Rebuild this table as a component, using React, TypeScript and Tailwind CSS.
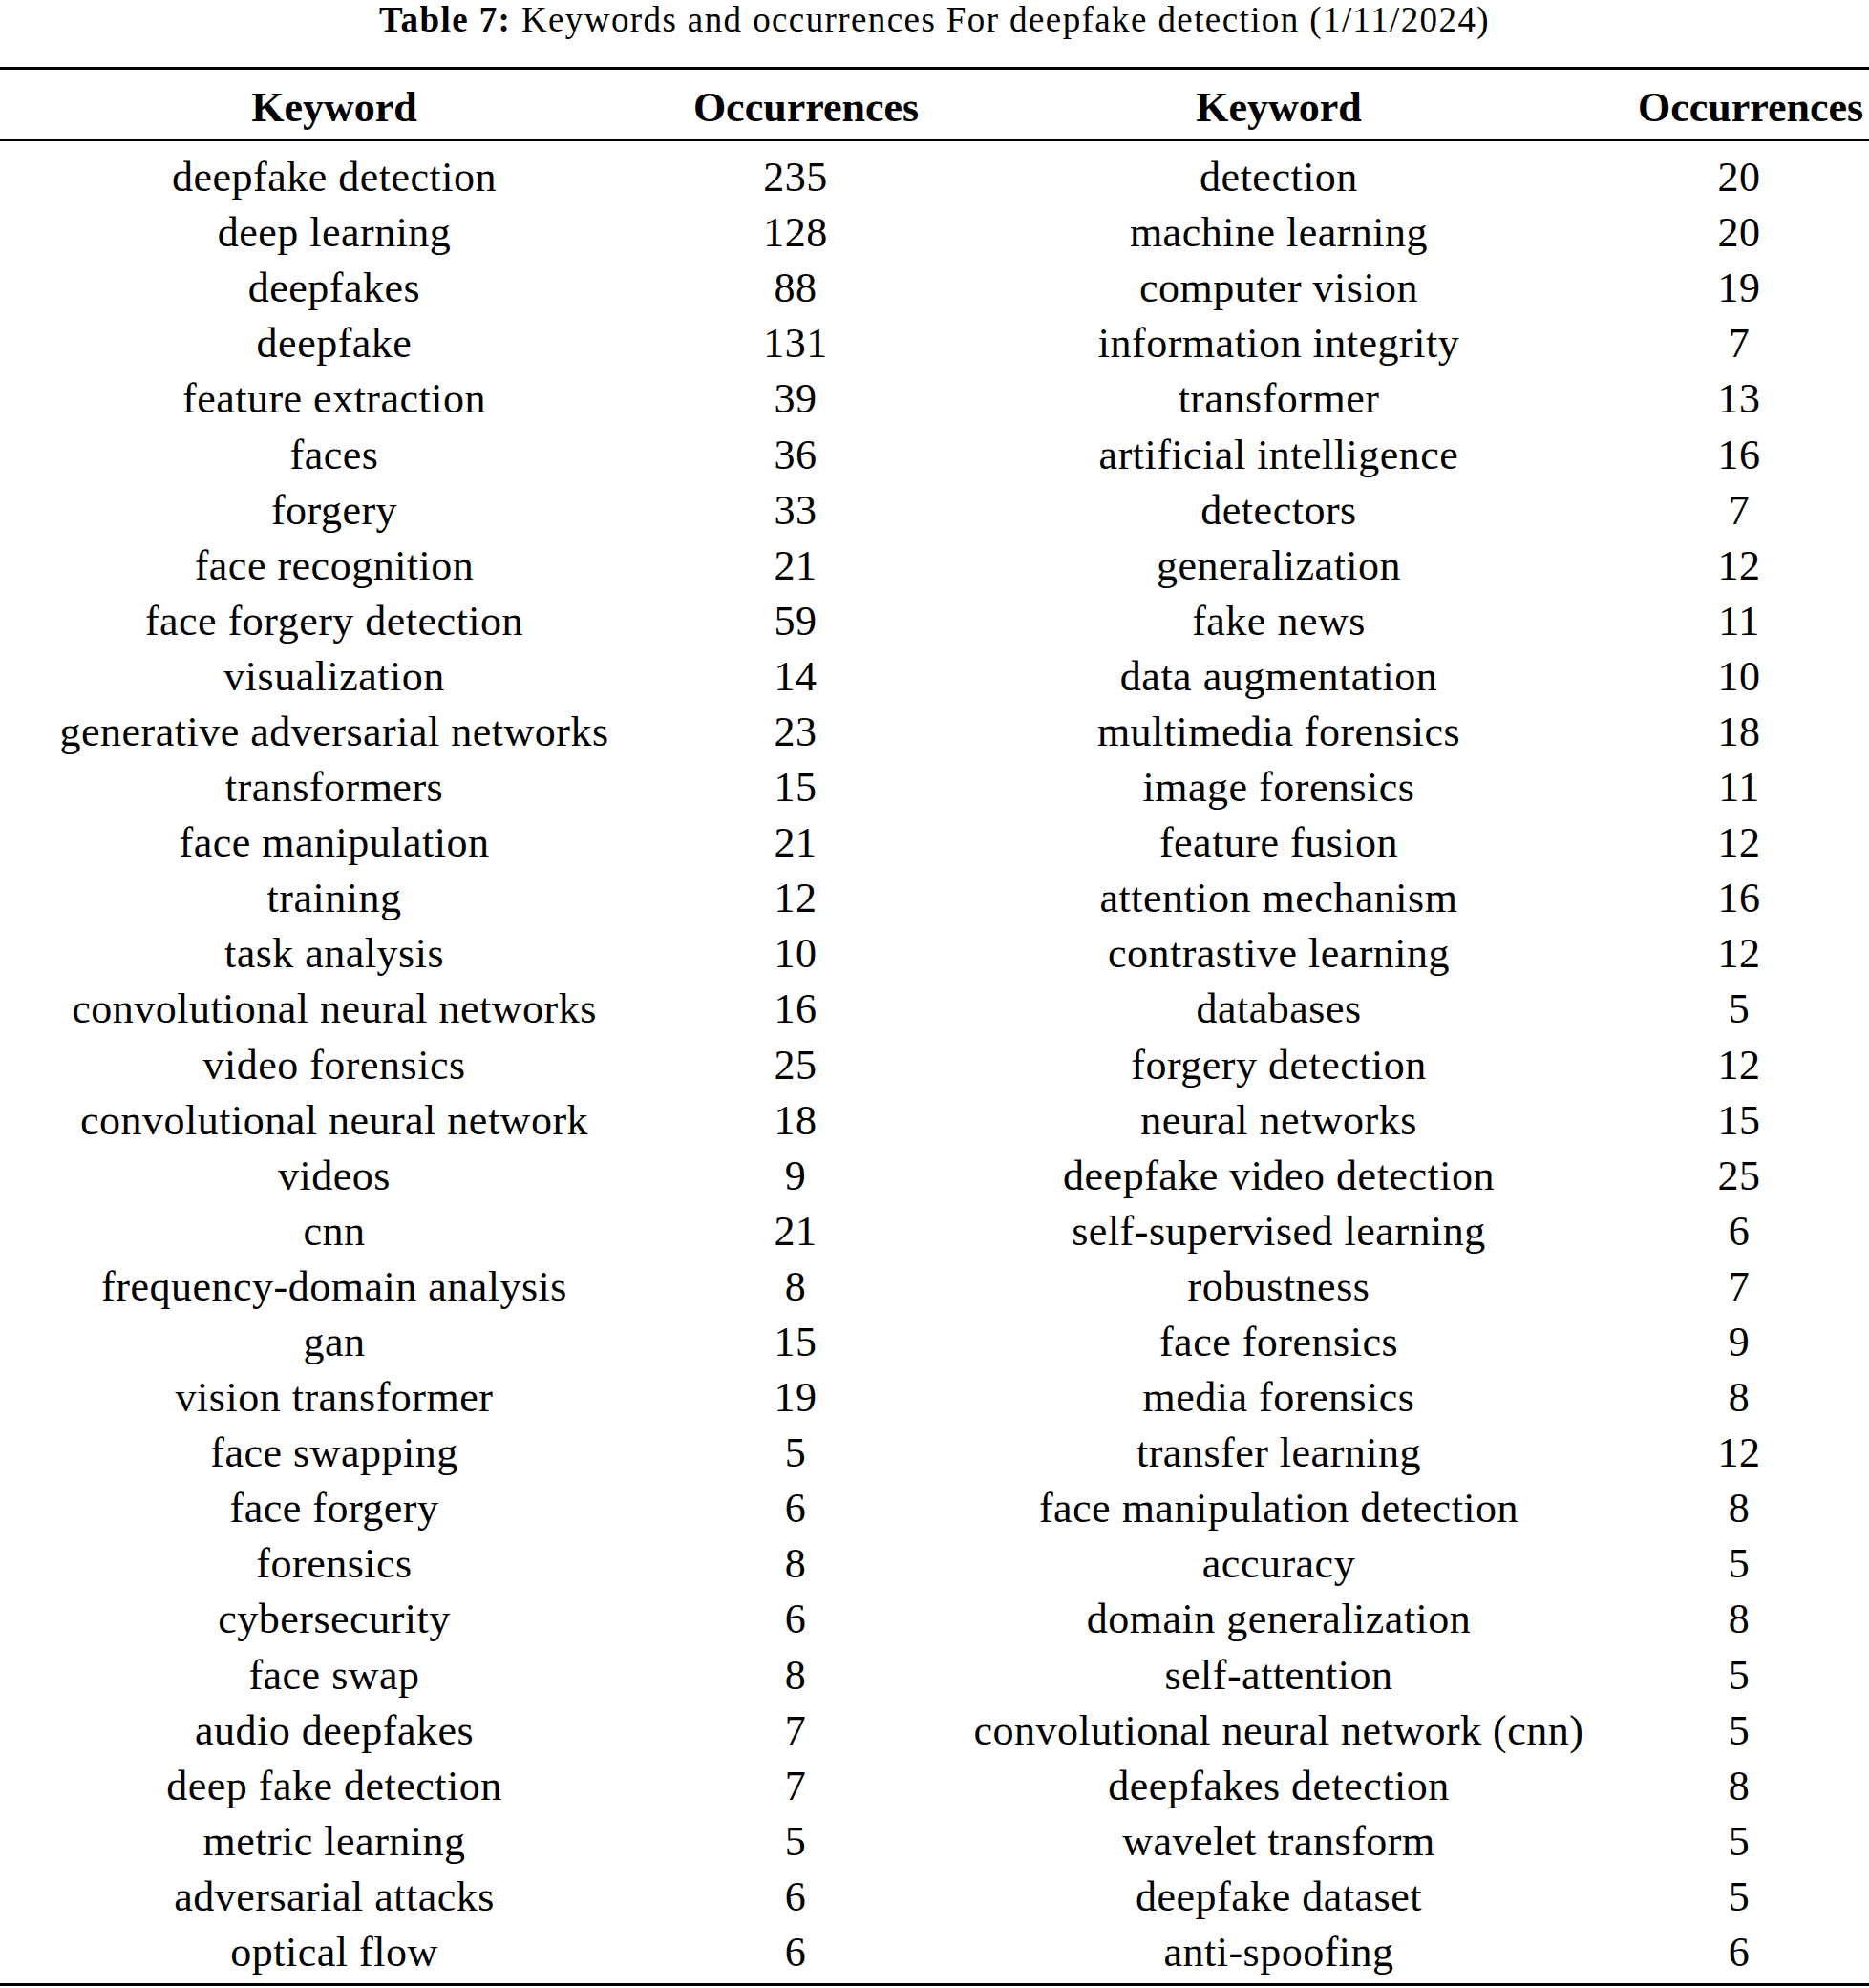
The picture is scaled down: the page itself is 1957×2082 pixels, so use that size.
import React from 'react';

const rows: [string, string, string, string][] = [
  ['deepfake detection', '235', 'detection', '20'],
  ['deep learning', '128', 'machine learning', '20'],
  ['deepfakes', '88', 'computer vision', '19'],
  ['deepfake', '131', 'information integrity', '7'],
  ['feature extraction', '39', 'transformer', '13'],
  ['faces', '36', 'artificial intelligence', '16'],
  ['forgery', '33', 'detectors', '7'],
  ['face recognition', '21', 'generalization', '12'],
  ['face forgery detection', '59', 'fake news', '11'],
  ['visualization', '14', 'data augmentation', '10'],
  ['generative adversarial networks', '23', 'multimedia forensics', '18'],
  ['transformers', '15', 'image forensics', '11'],
  ['face manipulation', '21', 'feature fusion', '12'],
  ['training', '12', 'attention mechanism', '16'],
  ['task analysis', '10', 'contrastive learning', '12'],
  ['convolutional neural networks', '16', 'databases', '5'],
  ['video forensics', '25', 'forgery detection', '12'],
  ['convolutional neural network', '18', 'neural networks', '15'],
  ['videos', '9', 'deepfake video detection', '25'],
  ['cnn', '21', 'self-supervised learning', '6'],
  ['frequency-domain analysis', '8', 'robustness', '7'],
  ['gan', '15', 'face forensics', '9'],
  ['vision transformer', '19', 'media forensics', '8'],
  ['face swapping', '5', 'transfer learning', '12'],
  ['face forgery', '6', 'face manipulation detection', '8'],
  ['forensics', '8', 'accuracy', '5'],
  ['cybersecurity', '6', 'domain generalization', '8'],
  ['face swap', '8', 'self-attention', '5'],
  ['audio deepfakes', '7', 'convolutional neural network (cnn)', '5'],
  ['deep fake detection', '7', 'deepfakes detection', '8'],
  ['metric learning', '5', 'wavelet transform', '5'],
  ['adversarial attacks', '6', 'deepfake dataset', '5'],
  ['optical flow', '6', 'anti-spoofing', '6'],
];

// column centres: 350 / 833 / 1339 / 1821
const cols = 'grid grid-cols-[700px_266px_746px_218px]';
const cell = 'flex justify-center';

export default function App() {
  return (
    <div className="w-[1957px] h-[2082px] bg-white text-black font-['Liberation_Serif',serif] overflow-hidden">
      {/* Caption */}
      <div className="h-[70px] flex justify-center">
        <p className="text-[37px] leading-[42px] tracking-[1.4px] whitespace-nowrap">
          <span className="font-bold">Table 7:</span> Keywords and occurrences For deepfake detection (1/11/2024)
        </p>
      </div>

      <div className="border-t-[3px] border-black" />

      {/* Header */}
      <div className={`${cols} h-[73px] items-center pt-[6px] text-[44px] leading-none font-bold whitespace-nowrap`}>
        <div className={cell}>Keyword</div>
        <div className={`${cell} pl-[22px]`}>Occurrences</div>
        <div className={cell}>Keyword</div>
        <div className={`${cell} pl-[24px]`}>Occurrences</div>
      </div>

      <div className="border-t-[2px] border-black" />

      {/* Body */}
      <div className="pt-[9px] pb-[3px] text-[44px] leading-none tracking-[0.5px] whitespace-nowrap">
        {rows.map((r, i) => (
          <div key={i} className={`${cols} h-[58.1px] items-center`}>
            <div className={cell}>{r[0]}</div>
            <div className={cell}>{r[1]}</div>
            <div className={cell}>{r[2]}</div>
            <div className={cell}>{r[3]}</div>
          </div>
        ))}
      </div>

      <div className="border-t-[3px] border-black" />
    </div>
  );
}
